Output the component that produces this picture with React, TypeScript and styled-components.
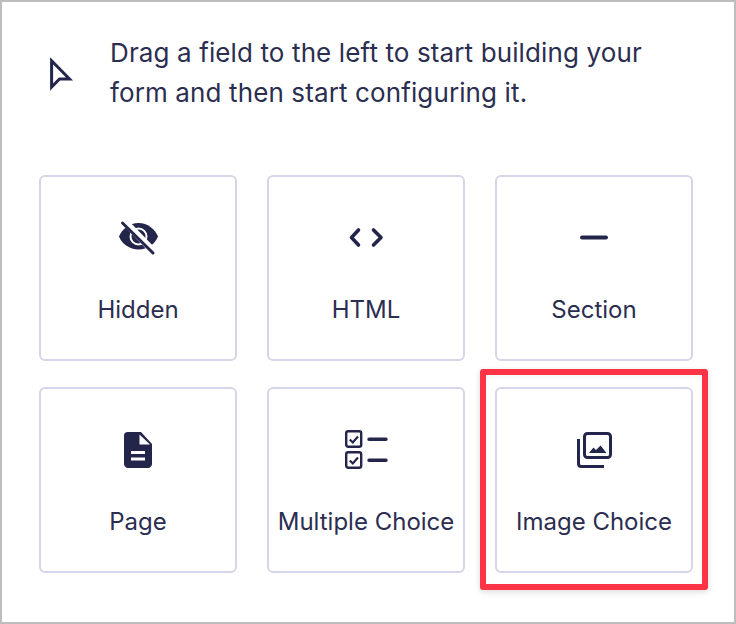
import React from "react";
import styled, { createGlobalStyle } from "styled-components";

const Global = createGlobalStyle`
  html, body { margin: 0; padding: 0; background: #fff; }
  body { font-family: Inter, "Liberation Sans", sans-serif; color: #2b2e50; }
`;

const Page = styled.div`
  box-sizing: border-box;
  width: 736px;
  height: 624px;
  border: 2px solid #bdbdbd;
  padding: 31px 41px 0 37px;
  background: #fff;
`;

const Hint = styled.div`
  display: flex;
  align-items: center;
  gap: 34px;
  padding-left: 9px;
  height: 80px;
`;

const HintText = styled.p`
  margin: 0;
  font-size: 26px;
  letter-spacing: 0.12px;
  line-height: 40px;
  white-space: nowrap;
`;

const Grid = styled.div`
  display: grid;
  grid-template-columns: repeat(3, 198px);
  grid-auto-rows: 186px;
  column-gap: 30px;
  row-gap: 26px;
  margin-top: 62px;
`;

const Card = styled.div<{ $highlight?: boolean }>`
  position: relative;
  box-sizing: border-box;
  display: flex;
  flex-direction: column;
  align-items: center;
  border: 2px solid #d5d6e8;
  border-radius: 6px;
  padding-top: 36px;
  ${(p) =>
    p.$highlight &&
    `
    &::after {
      content: "";
      position: absolute;
      left: -17px;
      top: -20px;
      width: 228px;
      height: 221px;
      box-sizing: border-box;
      border: 6px solid #fc3445;
      border-radius: 3px;
      box-shadow: 0 2px 6px rgba(0, 0, 0, 0.14), inset 0 2px 6px rgba(0, 0, 0, 0.05);
    }
  `}
`;

const IconSlot = styled.div`
  width: 48px;
  height: 48px;
  display: flex;
  align-items: center;
  justify-content: center;
`;

const Label = styled.div`
  margin-top: 29px;
  font-size: 24px;
  line-height: 40px;
  white-space: nowrap;
`;

const Svg = styled.svg`
  display: block;
  width: 48px;
  height: 48px;
  fill: none;
  stroke: #23264a;
`;

const CursorIcon = () => (
  <svg width="28" height="36" viewBox="0 0 28 36" style={{ display: "block" }}>
    <path d="M3.600 5.800L21.500 24H11.500L3.600 32Z" fill="none" stroke="#23264a" strokeWidth="3" />
  </svg>
);

const HiddenIcon = () => (
  <Svg viewBox="0 0 48 48">
    <path
      d="M5 23.500C8 16 15.500 10 24.500 10S41 16 44 23.500C41 31 33.500 36.500 24.500 36.500S8 31 5 23.500Z"
      fill="#23264a"
      stroke="none"
    />
    <circle cx="24.500" cy="23.500" r="8" stroke="#fff" strokeWidth="2" />
    <path d="M10 8L42 41" stroke="#fff" strokeWidth="7" />
    <path d="M8.500 10L39 40" strokeWidth="3" strokeLinecap="round" />
  </Svg>
);

const CodeIcon = () => (
  <Svg viewBox="0 0 48 48">
    <path d="M16.500 17L9.500 24.500L16.500 32" strokeWidth="3.600" strokeLinecap="round" strokeLinejoin="round" />
    <path d="M31.500 17L39 24.500L31.500 32" strokeWidth="3.600" strokeLinecap="round" strokeLinejoin="round" />
  </Svg>
);

const MinusIcon = () => (
  <Svg viewBox="0 0 48 48">
    <path d="M12 24.500H36" strokeWidth="4" strokeLinecap="round" />
  </Svg>
);

const PageIcon = () => (
  <Svg viewBox="0 0 48 48">
    <path
      d="M13.500 7H27L38 19V39C38 41.200 36.200 43 34 43H14C11.800 43 10 41.200 10 39V10.500C10 8.500 11.500 7 13.500 7Z"
      fill="#23264a"
      stroke="none"
    />
    <path d="M25.500 9.500V19.500H36Z" fill="#fff" stroke="none" />
    <path d="M17 27.500H31M17 34H31" stroke="#fff" strokeWidth="3" />
  </Svg>
);

const ChecklistIcon = () => (
  <Svg viewBox="0 0 48 48">
    <rect x="4.200" y="6.200" width="15" height="15.500" rx="2" strokeWidth="2.400" />
    <rect x="4.200" y="27.200" width="15" height="15.500" rx="2" strokeWidth="2.400" />
    <path d="M7.800 14.500L10.800 17.500L16 11.500M7.800 35.500L10.800 38.500L16 32.500" strokeWidth="2.200" />
    <path d="M27 14.300H44M27 35.300H44" strokeWidth="3.400" strokeLinecap="round" />
  </Svg>
);

const GalleryIcon = () => (
  <Svg viewBox="0 0 48 48">
    <rect x="14.500" y="8.500" width="26" height="24" rx="3" strokeWidth="3" />
    <path d="M8.500 14V38.500C8.500 40.500 9.500 41.500 11.500 41.500H34" strokeWidth="3" />
    <path d="M19 28L23.500 22.500L26 25L30.500 20.500L36.500 28Z" fill="#23264a" stroke="none" />
  </Svg>
);

const fields = [
  { label: "Hidden", icon: <HiddenIcon /> },
  { label: "HTML", icon: <CodeIcon /> },
  { label: "Section", icon: <MinusIcon /> },
  { label: "Page", icon: <PageIcon /> },
  { label: "Multiple Choice", icon: <ChecklistIcon /> },
  { label: "Image Choice", icon: <GalleryIcon />, highlight: true },
];

export default function App() {
  return (
    <>
      <Global />
      <Page>
        <Hint>
          <CursorIcon />
          <HintText>
            Drag a field to the left to start building your
            <br />
            form and then start configuring it.
          </HintText>
        </Hint>
        <Grid>
          {fields.map((f) => (
            <Card key={f.label} $highlight={f.highlight}>
              <IconSlot>{f.icon}</IconSlot>
              <Label>{f.label}</Label>
            </Card>
          ))}
        </Grid>
      </Page>
    </>
  );
}
